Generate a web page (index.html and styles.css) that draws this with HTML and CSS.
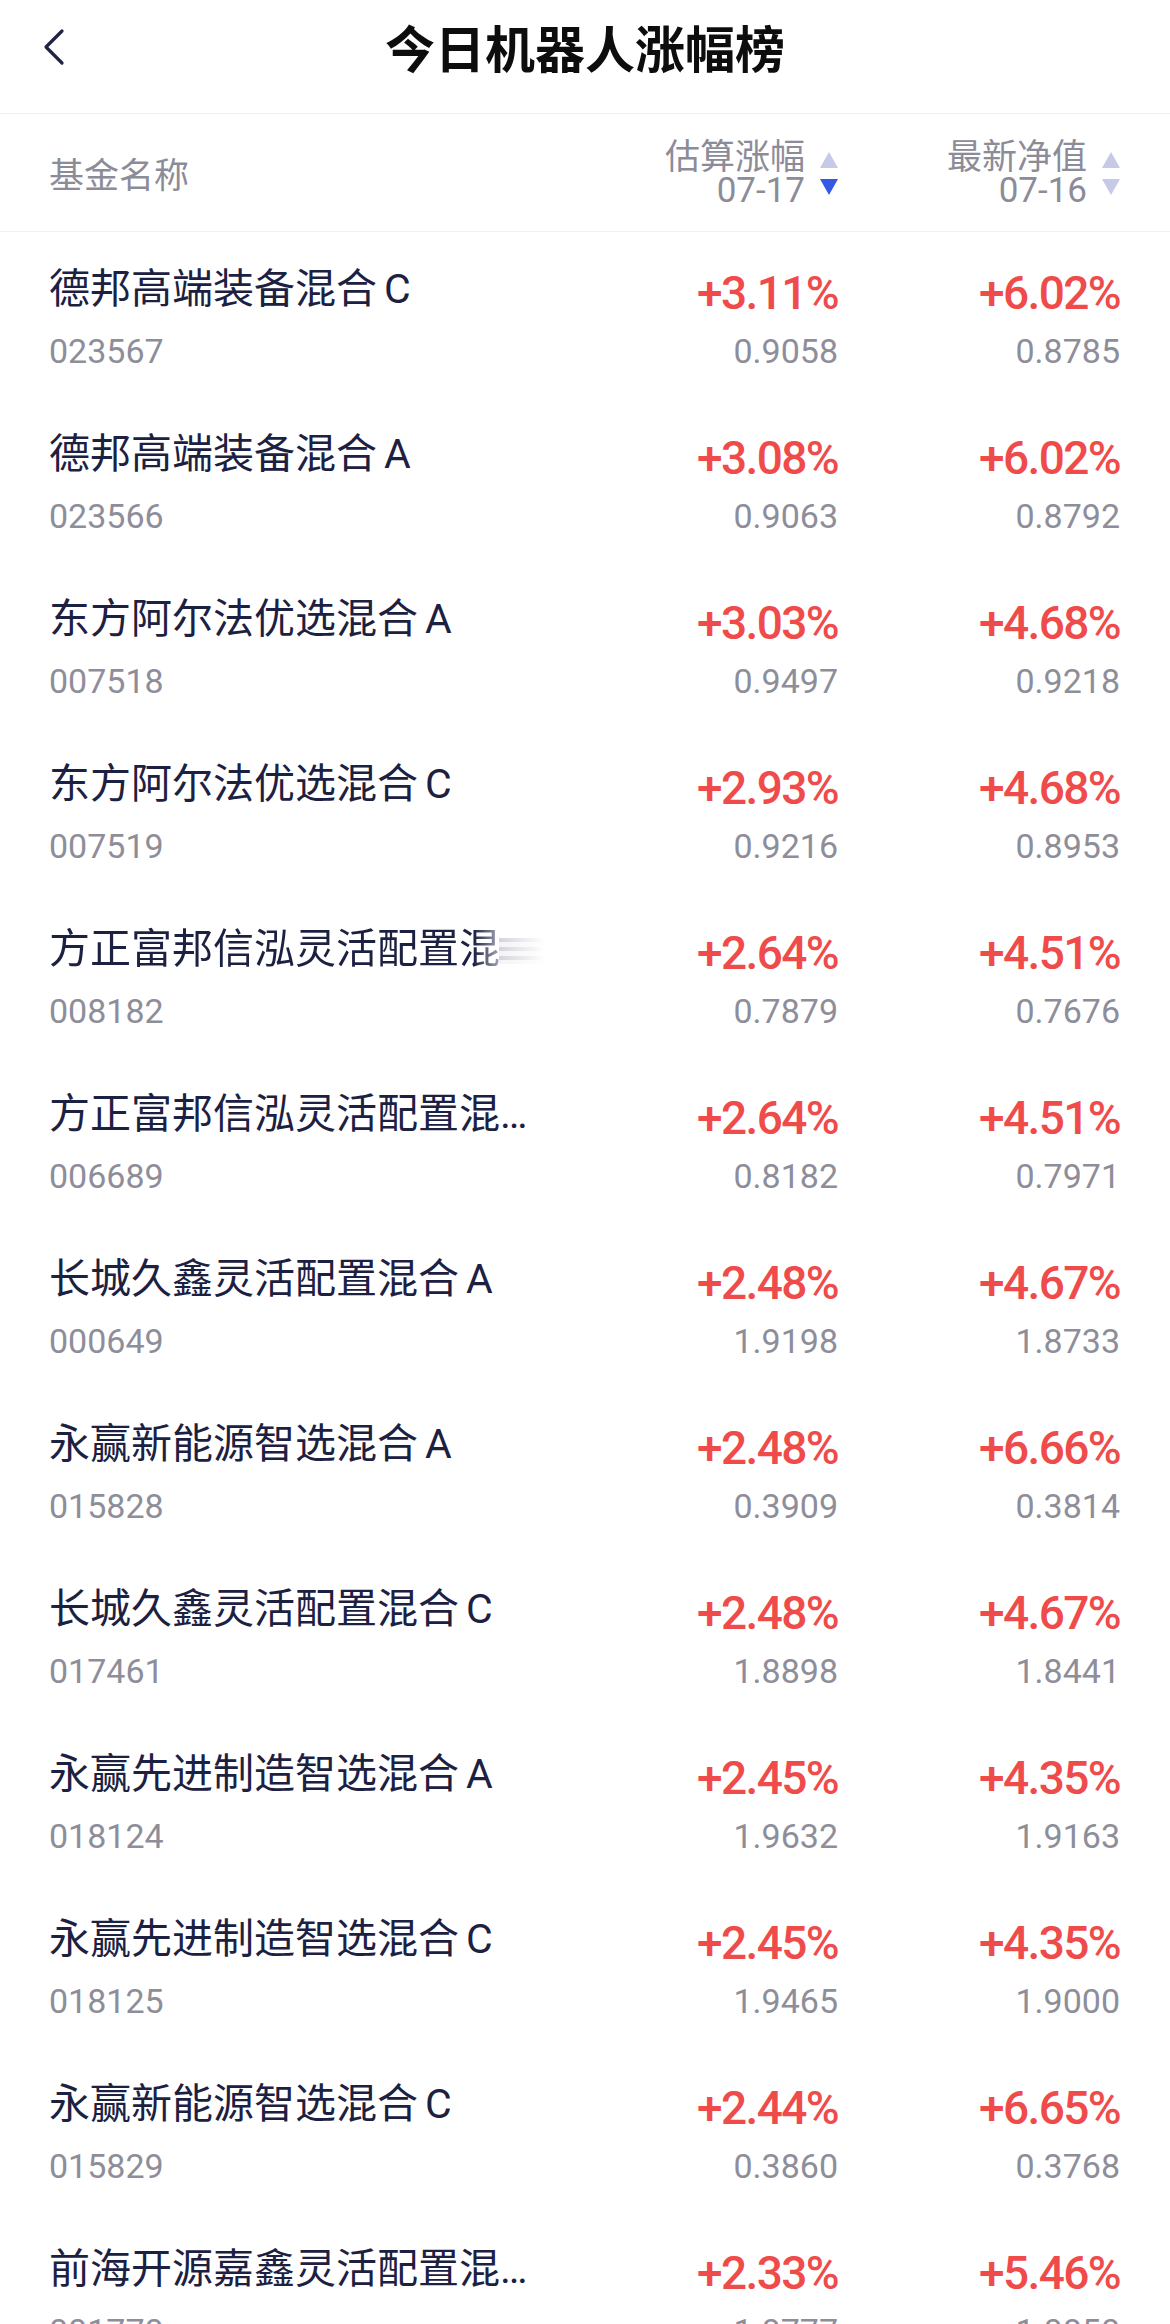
FILE: index.html
```html
<!DOCTYPE html>
<html lang="zh-CN">
<head>
    <meta charset="UTF-8">
    <meta name="viewport" content="width=device-width, initial-scale=1.0">
    <title>今日机器人涨幅榜</title>
    <link rel="stylesheet" href="styles.css">
</head>
<body>
  <!-- 顶部导航 -->
  <header class="nav">
    <a class="back" href="#">
      <svg width="24" height="38" viewBox="0 0 24 38"><path d="M20 3 L4 19 L20 35" fill="none" stroke="#1f2444" stroke-width="3.2" stroke-linecap="round" stroke-linejoin="round"/></svg>
    </a>
    <h1 class="title">今日机器人涨幅榜</h1>
  </header>

  <!-- 表头 -->
  <div class="thead">
    <div class="th-name">基金名称</div>
    <div class="th-col">
      <div class="th-text"><span>估算涨幅</span><span class="th-date">07-17</span></div>
      <div class="sort"><i class="up"></i><i class="down on"></i></div>
    </div>
    <div class="th-col">
      <div class="th-text"><span>最新净值</span><span class="th-date">07-16</span></div>
      <div class="sort"><i class="up"></i><i class="down"></i></div>
    </div>
  </div>

  <!-- 列表 -->
  <ul class="list">
    <li class="row">
      <div class="fund"><div class="name">德邦高端装备混合<span class="cls">C</span></div><div class="code">023567</div></div>
      <div class="cell"><div class="pct">+3.11%</div><div class="val">0.9058</div></div>
      <div class="cell"><div class="pct">+6.02%</div><div class="val">0.8785</div></div>
    </li>
    <li class="row">
      <div class="fund"><div class="name">德邦高端装备混合<span class="cls">A</span></div><div class="code">023566</div></div>
      <div class="cell"><div class="pct">+3.08%</div><div class="val">0.9063</div></div>
      <div class="cell"><div class="pct">+6.02%</div><div class="val">0.8792</div></div>
    </li>
    <li class="row">
      <div class="fund"><div class="name">东方阿尔法优选混合<span class="cls">A</span></div><div class="code">007518</div></div>
      <div class="cell"><div class="pct">+3.03%</div><div class="val">0.9497</div></div>
      <div class="cell"><div class="pct">+4.68%</div><div class="val">0.9218</div></div>
    </li>
    <li class="row">
      <div class="fund"><div class="name">东方阿尔法优选混合<span class="cls">C</span></div><div class="code">007519</div></div>
      <div class="cell"><div class="pct">+2.93%</div><div class="val">0.9216</div></div>
      <div class="cell"><div class="pct">+4.68%</div><div class="val">0.8953</div></div>
    </li>
    <li class="row">
      <div class="fund"><div class="name-wrap"><div class="name fade">方正富邦信泓灵活配置混合C</div><span class="smear"></span></div><div class="code">008182</div></div>
      <div class="cell"><div class="pct">+2.64%</div><div class="val">0.7879</div></div>
      <div class="cell"><div class="pct">+4.51%</div><div class="val">0.7676</div></div>
    </li>
    <li class="row">
      <div class="fund"><div class="name">方正富邦信泓灵活配置混合A</div><div class="code">006689</div></div>
      <div class="cell"><div class="pct">+2.64%</div><div class="val">0.8182</div></div>
      <div class="cell"><div class="pct">+4.51%</div><div class="val">0.7971</div></div>
    </li>
    <li class="row">
      <div class="fund"><div class="name">长城久鑫灵活配置混合<span class="cls">A</span></div><div class="code">000649</div></div>
      <div class="cell"><div class="pct">+2.48%</div><div class="val">1.9198</div></div>
      <div class="cell"><div class="pct">+4.67%</div><div class="val">1.8733</div></div>
    </li>
    <li class="row">
      <div class="fund"><div class="name">永赢新能源智选混合<span class="cls">A</span></div><div class="code">015828</div></div>
      <div class="cell"><div class="pct">+2.48%</div><div class="val">0.3909</div></div>
      <div class="cell"><div class="pct">+6.66%</div><div class="val">0.3814</div></div>
    </li>
    <li class="row">
      <div class="fund"><div class="name">长城久鑫灵活配置混合<span class="cls">C</span></div><div class="code">017461</div></div>
      <div class="cell"><div class="pct">+2.48%</div><div class="val">1.8898</div></div>
      <div class="cell"><div class="pct">+4.67%</div><div class="val">1.8441</div></div>
    </li>
    <li class="row">
      <div class="fund"><div class="name">永赢先进制造智选混合<span class="cls">A</span></div><div class="code">018124</div></div>
      <div class="cell"><div class="pct">+2.45%</div><div class="val">1.9632</div></div>
      <div class="cell"><div class="pct">+4.35%</div><div class="val">1.9163</div></div>
    </li>
    <li class="row">
      <div class="fund"><div class="name">永赢先进制造智选混合<span class="cls">C</span></div><div class="code">018125</div></div>
      <div class="cell"><div class="pct">+2.45%</div><div class="val">1.9465</div></div>
      <div class="cell"><div class="pct">+4.35%</div><div class="val">1.9000</div></div>
    </li>
    <li class="row">
      <div class="fund"><div class="name">永赢新能源智选混合<span class="cls">C</span></div><div class="code">015829</div></div>
      <div class="cell"><div class="pct">+2.44%</div><div class="val">0.3860</div></div>
      <div class="cell"><div class="pct">+6.65%</div><div class="val">0.3768</div></div>
    </li>
    <li class="row">
      <div class="fund"><div class="name">前海开源嘉鑫灵活配置混合A</div><div class="code">001770</div></div>
      <div class="cell"><div class="pct">+2.33%</div><div class="val">1.0777</div></div>
      <div class="cell"><div class="pct">+5.46%</div><div class="val">1.0850</div></div>
    </li>
  </ul>
</body>
</html>
```

FILE: styles.css
```css
* {
    box-sizing: border-box;
    margin: 0;
    padding: 0;
}

body {
    font-family: "Noto Sans CJK SC", sans-serif;
    background-color: #fff;
    color: #1c2142;
    overflow: hidden;
}

/* 导航 */
.nav {
    position: relative;
    height: 114px;
    border-bottom: 1px solid #f0f0f3;
    display: flex;
    justify-content: center;
    padding-top: 16px;
}

.back {
    position: absolute;
    left: 42px;
    top: 28px;
    display: block;
}

.title {
    font-size: 50px;
    line-height: 60px;
    font-weight: 700;
    color: #0d0d0d;
}

/* 表头 */
.thead {
    display: grid;
    grid-template-columns: 1fr 290px 282px;
    align-items: center;
    height: 118px;
    padding: 0 50px 0 49px;
    border-bottom: 1px solid #f2f2f5;
    color: #8c8c99;
}

.th-name {
    font-size: 35px;
}

.th-col {
    display: flex;
    justify-content: flex-end;
    align-items: center;
    gap: 15px;
}

.th-text {
    display: flex;
    flex-direction: column;
    align-items: flex-end;
    gap: 1px;
    font-size: 35px;
}

.th-text span {
    line-height: 36px;
    height: 36px;
}

.th-date {
    font-family: Roboto, sans-serif;
}

.sort {
    display: flex;
    flex-direction: column;
    gap: 11px;
    padding-top: 2px;
}

.sort i {
    display: block;
    width: 0;
    height: 0;
    border-left: 9px solid transparent;
    border-right: 9px solid transparent;
}

.sort .up {
    border-bottom: 16px solid #c6c9e8;
}

.sort .down {
    border-top: 16px solid #c6c9e8;
}

.sort .down.on {
    border-top-color: #3558e6;
}

/* 列表 */
.list {
    list-style: none;
}

.row {
    display: grid;
    grid-template-columns: 1fr 290px 282px;
    height: 165px;
    padding: 29px 50px 0 49px;
}

.fund {
    min-width: 0;
}

.name {
    font-family: Roboto, "Noto Sans CJK SC", sans-serif;
    font-size: 41px;
    line-height: 56px;
    white-space: nowrap;
    overflow: hidden;
    text-overflow: ellipsis;
}

.cls {
    margin-left: 7px;
}

.name-wrap {
    display: flex;
    align-items: center;
}

.name.fade {
    width: 450px;
    flex: none;
    text-overflow: clip;
    -webkit-mask-image: linear-gradient(to right, #000 425px, rgba(0, 0, 0, 0.4) 450px);
    mask-image: linear-gradient(to right, #000 425px, rgba(0, 0, 0, 0.4) 450px);
}

.smear {
    width: 46px;
    height: 26px;
    margin-top: 4px;
    background:
        linear-gradient(to right, rgba(255, 255, 255, 0), #fff),
        repeating-linear-gradient(to bottom, #d4d5dc 0 4px, #f4f4f6 4px 9px);
}

.code,
.val {
    font-family: Roboto, sans-serif;
    font-size: 34px;
    line-height: 44px;
    margin-top: 12px;
    color: #8e8e9a;
}

.cell {
    text-align: right;
}

.pct {
    font-family: Roboto, sans-serif;
    font-weight: 500;
    font-size: 46px;
    letter-spacing: -1.6px;
    line-height: 56px;
    padding-top: 4px;
    margin-bottom: -4px;
    color: #ef4b4b;
}
```
